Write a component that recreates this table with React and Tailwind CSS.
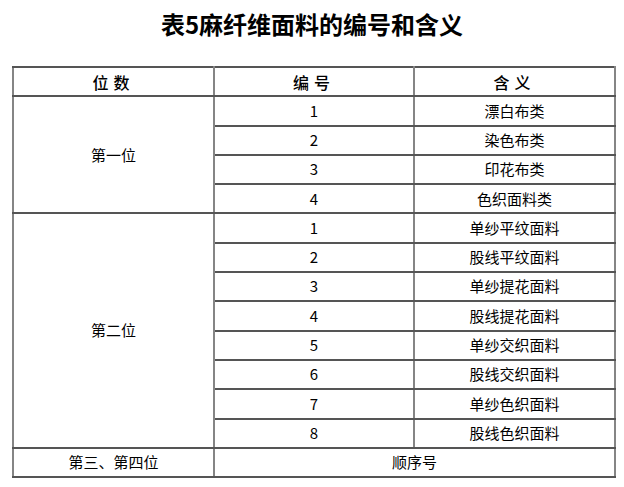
import React from "react";

const groupOne = ["漂白布类", "染色布类", "印花布类", "色织面料类"];
const groupTwo = [
  "单纱平纹面料",
  "股线平纹面料",
  "单纱提花面料",
  "股线提花面料",
  "单纱交织面料",
  "股线交织面料",
  "单纱色织面料",
  "股线色织面料",
];

const cell =
  "border-x-2 border-x-[#858585] border-y-2 border-y-[#555] text-center align-middle p-0";

export default function App() {
  return (
    <div
      className="w-[624px] h-[487px] bg-white text-black"
      style={{ fontFamily: '"Noto Sans CJK SC", "Noto Sans", sans-serif' }}
    >
      <div className="h-[66px] flex justify-center pt-[4px]">
        <h1 className="text-[24px] leading-[40px] font-bold">
          表5麻纤维面料的编号和含义
        </h1>
      </div>

      <table className="ml-[12px] w-[602px] border-collapse text-[15px] table-fixed">
        <colgroup>
          <col className="w-[201px]" />
          <col className="w-[200px]" />
          <col className="w-[201px]" />
        </colgroup>
        <tbody>
          <tr className="h-[29.3px]">
            <td className={cell + " text-[16px] tracking-[5px] font-medium"}>位数</td>
            <td className={cell + " text-[16px] tracking-[5px] font-medium"}>编号</td>
            <td className={cell + " text-[16px] tracking-[5px] font-medium"}>含义</td>
          </tr>
          {groupOne.map((m, i) => (
            <tr key={m} className="h-[29.3px]">
              {i === 0 && (
                <td rowSpan={4} className={cell}>
                  第一位
                </td>
              )}
              <td className={cell}>{i + 1}</td>
              <td className={cell}>{m}</td>
            </tr>
          ))}
          {groupTwo.map((m, i) => (
            <tr key={m} className="h-[29.3px]">
              {i === 0 && (
                <td rowSpan={8} className={cell}>
                  第二位
                </td>
              )}
              <td className={cell}>{i + 1}</td>
              <td className={cell}>{m}</td>
            </tr>
          ))}
          <tr className="h-[29.3px]">
            <td className={cell}>第三、第四位</td>
            <td colSpan={2} className={cell}>
              顺序号
            </td>
          </tr>
        </tbody>
      </table>
    </div>
  );
}
